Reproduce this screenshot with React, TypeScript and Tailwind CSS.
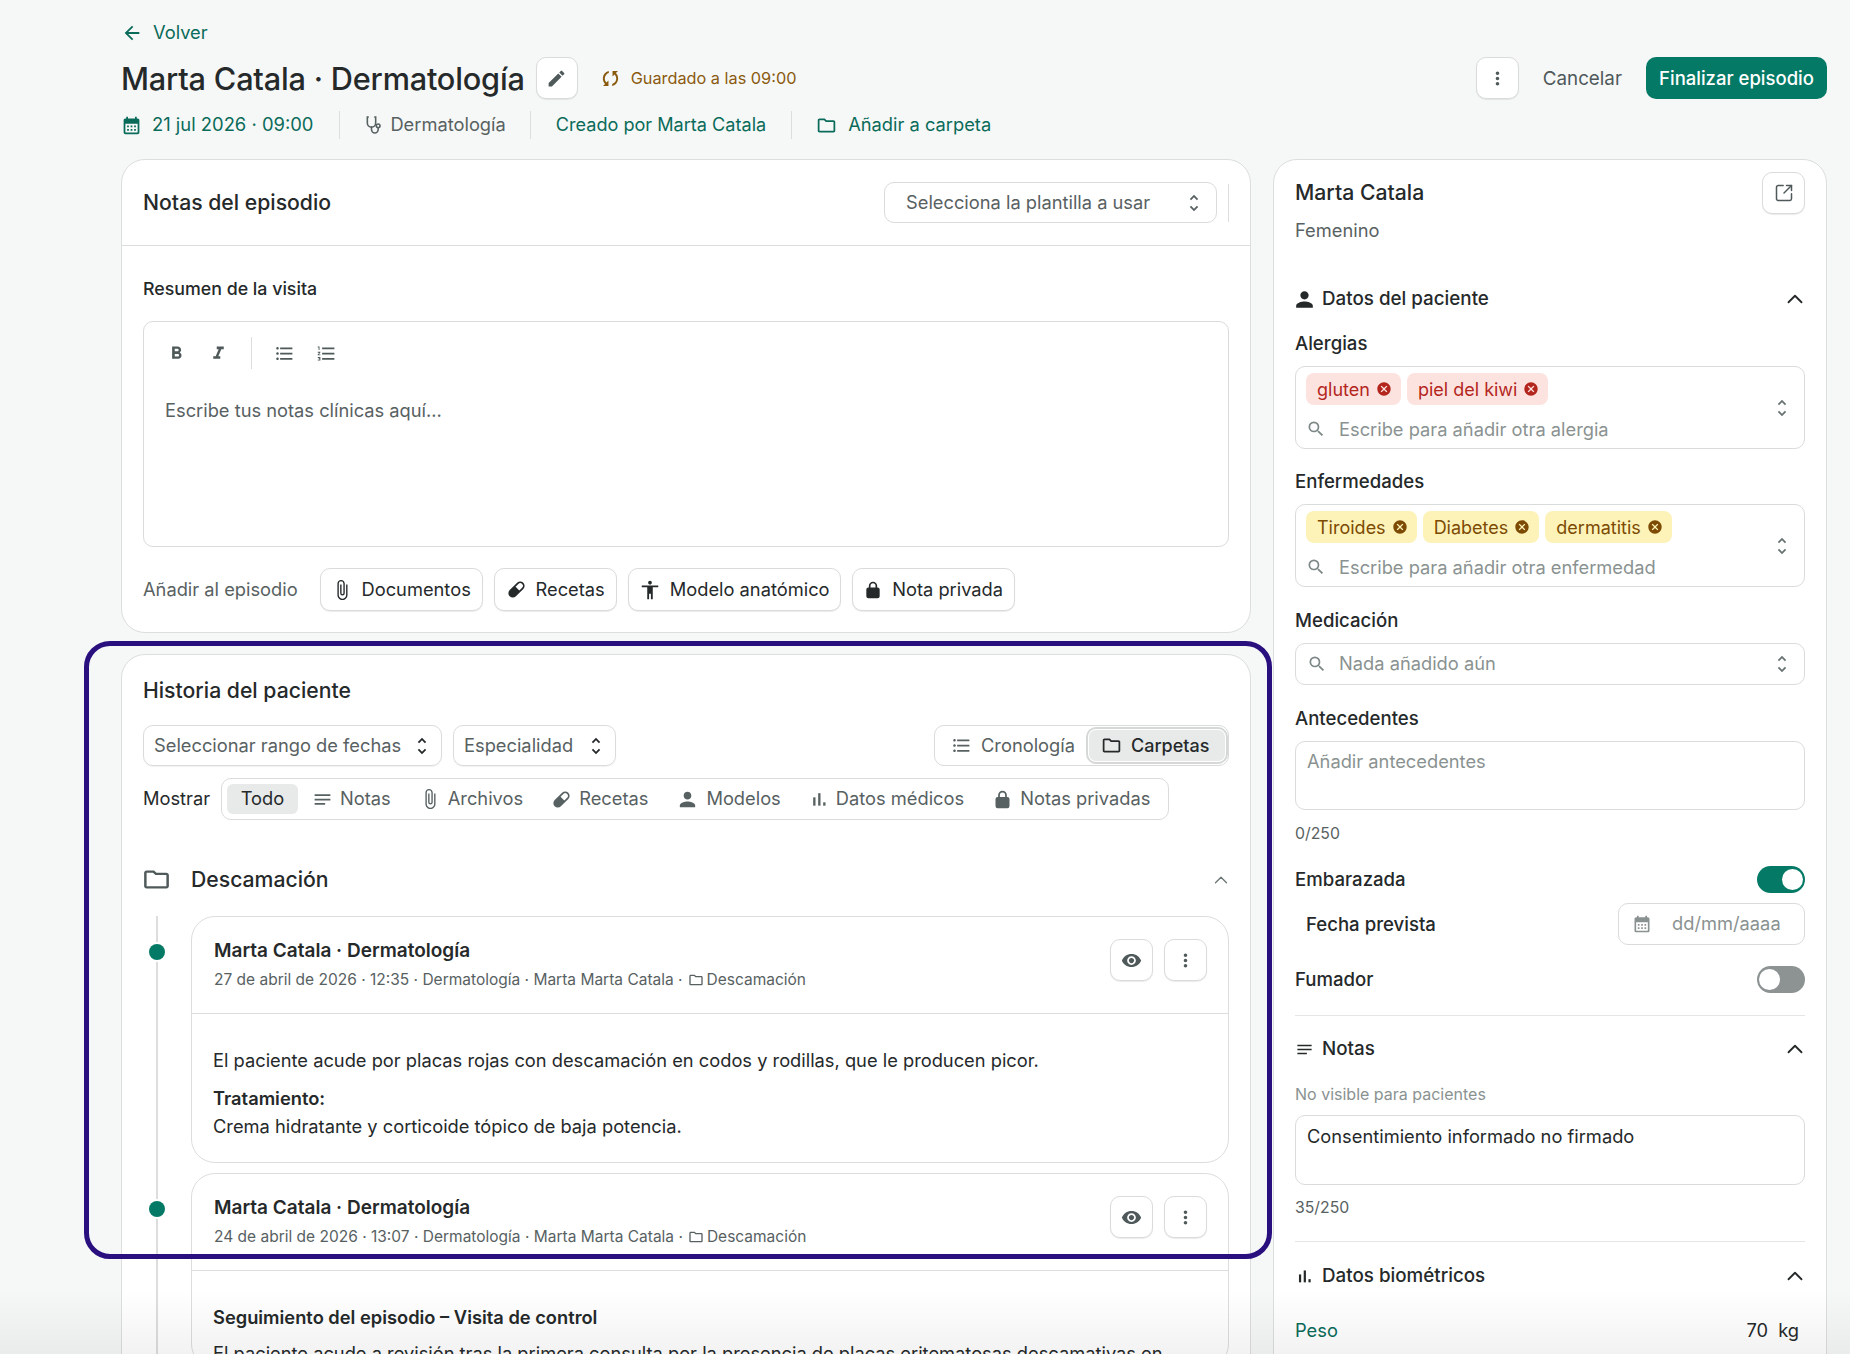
import React from 'react';
import {
  MdArrowBack, MdEdit, MdMoreVert, MdCalendarMonth, MdFormatBold, MdFormatItalic, MdFormatListBulleted,
  MdFormatListNumbered, MdAttachFile, MdAccessibility, MdUnfoldMore, MdNotes,
  MdPerson, MdSearch, MdCancel, MdRemoveRedEye, MdOutlineFolder, MdSync,
} from 'react-icons/md';
import { SquareArrowOutUpRight, ChevronUp } from 'lucide-react';

function PillIcon({ className }: { className?: string }) {
  return (
    <svg viewBox="0 0 24 24" className={className} fill="currentColor">
      <path d="M4.2 19.8a5 5 0 0 1 0-7.1l8.5-8.5a5 5 0 0 1 7.1 7.1l-8.5 8.5a5 5 0 0 1-7.1 0Zm9.9-14.2-3.2 3.2 4.3 4.3 3.2-3.2a3 3 0 0 0-4.3-4.3Z" />
    </svg>
  );
}

function ScopeIcon({ className }: { className?: string }) {
  return (
    <svg viewBox="0 0 24 24" className={className} fill="none" stroke="currentColor" strokeWidth={1.9} strokeLinecap="round">
      <path d="M5 2.5H4v7a5 5 0 0 0 10 0v-7h-1" />
      <path d="M9 14.5v3a4 4 0 0 0 8 0v-2" />
      <circle cx="17" cy="13" r="2.2" />
    </svg>
  );
}

function LockIcon({ className }: { className?: string }) {
  return (
    <svg viewBox="0 0 24 24" className={className} fill="currentColor">
      <path d="M12 2a5 5 0 0 0-5 5v2H6.5A2.5 2.5 0 0 0 4 11.500v8A2.500 2.500 0 0 0 6.500 22h11a2.500 2.500 0 0 0 2.500-2.500v-8A2.500 2.500 0 0 0 17.500 9H17V7a5 5 0 0 0-5-5Zm-3 7V7a3 3 0 0 1 6 0v2H9Z" />
    </svg>
  );
}

function BarsIcon({ className }: { className?: string }) {
  return (
    <svg viewBox="0 0 24 24" className={className} fill="currentColor">
      <rect x="5" y="10" width="2.800" height="10" />
      <rect x="11" y="5" width="2.800" height="15" />
      <rect x="17" y="16" width="2.800" height="4" />
    </svg>
  );
}

function IconButton({ children, className = '' }: { children: React.ReactNode; className?: string }) {
  return (
    <button className={`flex items-center justify-center bg-white border border-[#d9dcdb] rounded-[10px] shadow-[0_1px_1px_rgba(0,0,0,0.08)] text-[#4f595a] ${className}`}>
      {children}
    </button>
  );
}

function Chip({ label, tone }: { label: string; tone: 'red' | 'yellow' }) {
  const cls = tone === 'red' ? 'bg-[#fde3df] text-[#b3261e]' : 'bg-[#fdf3b8] text-[#7c4a03]';
  return (
    <span className={`flex items-center h-[32px] pl-[11px] pr-[9px] gap-[6px] rounded-[8px] text-[18px] ${cls}`}>
      {label}
      <MdCancel className="w-[16px] h-[16px]" />
    </span>
  );
}

function FieldLabel({ children, className = '' }: { children: React.ReactNode; className?: string }) {
  return <div className={`text-[18.6px] font-medium text-[#25292a] leading-[22px] ${className}`}>{children}</div>;
}

function SectionHead({ icon, label }: { icon: React.ReactNode; label: string }) {
  return (
    <div className="flex items-center justify-between h-[24px]">
      <div className="flex items-center gap-[8px] text-[18.8px] font-medium text-[#25292a]">
        <span className="w-[19px] flex justify-center">{icon}</span>
        {label}
      </div>
      <ChevronUp className="w-[26px] h-[26px] text-[#25292a] mr-[-3px]" strokeWidth={1.7} />
    </div>
  );
}

function TagField({ tags, tone, placeholder }: { tags: string[]; tone: 'red' | 'yellow'; placeholder: string }) {
  return (
    <div className="relative h-[83px] border border-[#d9dcdb] rounded-[10px] pl-[10px] pt-[6px]">
      <div className="flex gap-[6px]">
        {tags.map((t) => <Chip key={t} label={t} tone={tone} />)}
      </div>
      <div className="flex items-center gap-[13px] mt-[12px] leading-[24px] text-[#8a9291]">
        <MdSearch className="w-[20px] h-[20px] text-[#7d8786]" />
        <span>{placeholder}</span>
      </div>
      <MdUnfoldMore className="absolute right-[11px] top-[30px] w-[22px] h-[22px] text-[#6a7373]" />
    </div>
  );
}

function EpisodeHeader({ date, time }: { date: string; time: string }) {
  return (
    <div className="flex items-start justify-between h-[97px] pl-[22px] pr-[21px] pt-[22px] border-b border-[#dcdedd]">
      <div>
        <div className="text-[19px] font-semibold text-[#25292a] leading-[24px]">Marta Catala · Dermatología</div>
        <div className="flex items-center text-[15.5px] text-[#586162] mt-[6px] leading-[22px]">
          {date} · {time} · Dermatología · Marta Marta Catala ·
          <MdOutlineFolder className="w-[16px] h-[16px] ml-[5px] mr-[3px]" />
          Descamación
        </div>
      </div>
      <div className="flex gap-[11px]">
        <IconButton className="w-[43px] h-[42px]"><MdRemoveRedEye className="w-[21px] h-[21px]" /></IconButton>
        <IconButton className="w-[43px] h-[42px]"><MdMoreVert className="w-[21px] h-[21px]" /></IconButton>
      </div>
    </div>
  );
}

const filters = [
  { label: 'Notas', icon: <MdNotes className="w-[21px] h-[21px]" /> },
  { label: 'Archivos', icon: <MdAttachFile className="w-[22px] h-[22px]" /> },
  { label: 'Recetas', icon: <PillIcon className="w-[21px] h-[21px]" /> },
  { label: 'Modelos', icon: <MdPerson className="w-[23px] h-[23px]" /> },
  { label: 'Datos médicos', icon: <BarsIcon className="w-[20px] h-[20px]" /> },
  { label: 'Notas privadas', icon: <LockIcon className="w-[21px] h-[21px]" /> },
];

export default function App() {
  return (
    <div className="relative h-[1354px] overflow-hidden bg-[#f6f8f7] text-[#25292a] text-[18.3px] font-['Inter',sans-serif]">
      <div className="pl-[121px] pr-[23px]">
        <div className="flex items-center h-[64px] pt-[1px] gap-[10px] text-[18.3px] text-[#0a6b5a]">
          <MdArrowBack className="w-[22px] h-[22px]" />
          Volver
        </div>

        <div className="flex items-center justify-between h-[42px] mt-[-7px]">
          <div className="flex items-center">
            <h1 className="text-[30.7px] font-medium leading-[36px] text-[#25292a] tracking-[-0.2px] pt-[2px]">Marta Catala · Dermatología</h1>
            <IconButton className="w-[42px] h-[42px] ml-[11px]"><MdEdit className="w-[21px] h-[21px]" /></IconButton>
            <div className="flex items-center ml-[21px] gap-[9px] text-[16.3px] text-[#8a5a0f]">
              <MdSync className="w-[23px] h-[23px] rotate-45" />
              Guardado a las 09:00
            </div>
          </div>
          <div className="flex items-center">
            <IconButton className="w-[43px] h-[42px]"><MdMoreVert className="w-[21px] h-[21px]" /></IconButton>
            <span className="ml-[24px] pt-[2px] text-[#4f595a] text-[18.8px]">Cancelar</span>
            <button className="ml-[24px] h-[42px] w-[181px] pt-[1px] rounded-[10px] bg-[#047a66] text-white text-[18.5px] font-medium">Finalizar episodio</button>
          </div>
        </div>

        <div className="flex items-center h-[28px] mt-[12px] text-[18.3px]">
          <div className="flex items-center gap-[10px] text-[#0a6b5a] pr-[26px] border-r border-[#dcdedd] h-[28px]">
            <MdCalendarMonth className="w-[21px] h-[21px]" />
            <span className="text-[18.4px]">21 jul 2026 · 09:00</span>
          </div>
          <div className="flex items-center gap-[6px] text-[#586162] px-[24px] border-r border-[#dcdedd] h-[28px]">
            <ScopeIcon className="w-[20px] h-[20px]" />
            Dermatología
          </div>
          <div className="flex items-center text-[#0a6b5a] pl-[25px] pr-[25px] border-r border-[#dcdedd] h-[28px] text-[18.1px]">Creado por Marta Catala</div>
          <div className="flex items-center gap-[11px] text-[#0a6b5a] pl-[24px] h-[28px]">
            <MdOutlineFolder className="w-[21px] h-[21px]" />
            Añadir a carpeta
          </div>
        </div>

        <div className="flex gap-[22px] mt-[20px] items-start">
          {/* columna izquierda */}
          <div className="w-[1130px] shrink-0 flex flex-col gap-[21px]">
            <section className="h-[474px] bg-white border border-[#dcdedd] rounded-[24px]">
              <div className="flex items-center justify-between h-[86px] pl-[21px] pr-[21px] border-b border-[#dcdedd]">
                <h2 className="text-[21.2px] font-medium">Notas del episodio</h2>
                <div className="flex items-center h-[38px]">
                  <div className="flex items-center justify-between w-[333px] h-[41px] pl-[21px] pr-[11px] border border-[#d9dcdb] rounded-[10px] text-[#586162]">
                    Selecciona la plantilla a usar
                    <MdUnfoldMore className="w-[22px] h-[22px]" />
                  </div>
                  <div className="w-px h-[38px] bg-[#dcdedd] ml-[11px]" />
                </div>
              </div>
              <div className="px-[21px] pt-[32px]">
                <div className="text-[17.8px] font-medium leading-[22px]">Resumen de la visita</div>
                <div className="h-[226px] mt-[21px] border border-[#d9dcdb] rounded-[10px]">
                  <div className="flex items-center h-[62px] pl-[22px] text-[#4f595a]">
                    <MdFormatBold className="w-[21px] h-[21px]" />
                    <MdFormatItalic className="w-[21px] h-[21px] ml-[21px]" />
                    <div className="w-px h-[32px] bg-[#dcdedd] ml-[22px]" />
                    <MdFormatListBulleted className="w-[21px] h-[21px] ml-[22px]" />
                    <MdFormatListNumbered className="w-[21px] h-[21px] ml-[21px]" />
                  </div>
                  <div className="pl-[21px] mt-[13px] text-[#586162] leading-[26px]">Escribe tus notas clínicas aquí...</div>
                </div>
                <div className="flex items-center mt-[21px] gap-[11px]">
                  <span className="text-[#586162] mr-[11px]">Añadir al episodio</span>
                  <IconButton className="h-[43px] w-[163px] gap-[8px] !text-[#25292a]"><MdAttachFile className="w-[22px] h-[22px]" />Documentos</IconButton>
                  <IconButton className="h-[43px] w-[123px] gap-[9px] !text-[#25292a]"><PillIcon className="w-[21px] h-[21px]" />Recetas</IconButton>
                  <IconButton className="h-[43px] w-[213px] gap-[9px] !text-[#25292a]"><MdAccessibility className="w-[22px] h-[22px]" />Modelo anatómico</IconButton>
                  <IconButton className="h-[43px] w-[163px] gap-[9px] !text-[#25292a]"><LockIcon className="w-[20px] h-[20px]" />Nota privada</IconButton>
                </div>
              </div>
            </section>

            <section className="h-[760px] bg-white border border-[#dcdedd] rounded-[24px] pl-[21px] pr-[21px] pt-[21px]">
              <h2 className="text-[21.2px] font-medium leading-[28px]">Historia del paciente</h2>
              <div className="flex items-center justify-between mt-[21px]">
                <div className="flex gap-[11px] text-[#586162]">
                  <div className="flex items-center justify-between w-[299px] h-[41px] pl-[10px] pr-[8px] border border-[#d9dcdb] rounded-[10px] shadow-[0_1px_1px_rgba(0,0,0,0.06)]">
                    Seleccionar rango de fechas
                    <MdUnfoldMore className="w-[22px] h-[22px] text-[#25292a]" />
                  </div>
                  <div className="flex items-center justify-between w-[163px] h-[41px] pl-[10px] pr-[8px] border border-[#d9dcdb] rounded-[10px] shadow-[0_1px_1px_rgba(0,0,0,0.06)]">
                    Especialidad
                    <MdUnfoldMore className="w-[22px] h-[22px] text-[#25292a]" />
                  </div>
                </div>
                <div className="flex items-center justify-between w-[295px] h-[41px] pl-[16px] pr-[3px] border border-[#d9dcdb] rounded-[10px] text-[#586162]">
                  <span className="flex items-center gap-[9px]"><MdFormatListBulleted className="w-[21px] h-[21px]" />Cronología</span>
                  <span className="flex items-center gap-[9px] w-[136px] h-[31px] pl-[12px] bg-[#e8eaea] rounded-[7px] outline-2 outline-[#d5d8d7] outline-offset-1 text-[#25292a] font-medium text-[18px]"><MdOutlineFolder className="w-[21px] h-[21px]" />Carpetas</span>
                </div>
              </div>
              <div className="flex items-center mt-[12px] h-[42px]">
                <span className="w-[78px] text-[#25292a]">Mostrar</span>
                <div className="flex items-center h-[42px] pl-[5px] pr-[18px] border border-[#d9dcdb] rounded-[10px] text-[#586162]">
                  <span className="flex items-center justify-center w-[71px] h-[30px] mr-[14px] bg-[#e8eaea] rounded-[6px] text-[#25292a]">Todo</span>
                  <div className="flex items-center gap-[28px]">
                    {filters.map((f) => (
                      <span key={f.label} className="flex items-center gap-[7px]">{f.icon}{f.label}</span>
                    ))}
                  </div>
                </div>
              </div>
              <div className="flex items-center justify-between h-[32px] mt-[44px]">
                <div className="flex items-center gap-[21px] text-[21.2px] font-medium">
                  <MdOutlineFolder className="w-[27px] h-[27px] text-[#4f595a] scale-x-110" />
                  Descamación
                </div>
                <ChevronUp className="w-[22px] h-[22px] text-[#6a7373] mr-[-3px]" strokeWidth={1.4} />
              </div>
              <div className="relative mt-[20px] pl-[48px]">
                <div className="absolute left-[13px] top-0 bottom-[-200px] w-[2px] bg-[#dcdedd]" />
                <div className="absolute left-[6px] top-[28px] w-[16px] h-[16px] rounded-full bg-[#047a66] ring-2 ring-white" />
                <div className="absolute left-[6px] top-[285px] w-[16px] h-[16px] rounded-full bg-[#047a66] ring-2 ring-white" />
                <article className="h-[247px] border border-[#dcdedd] rounded-[24px]">
                  <EpisodeHeader date="27 de abril de 2026" time="12:35" />
                  <div className="px-[21px] pt-[32px] text-[#25292a] leading-[28px]">
                    <p>El paciente acude por placas rojas con descamación en codos y rodillas, que le producen picor.</p>
                    <p className="font-semibold mt-[10px]">Tratamiento:</p>
                    <p>Crema hidratante y corticoide tópico de baja potencia.</p>
                  </div>
                </article>
                <article className="mt-[10px] border border-[#dcdedd] rounded-[24px]">
                  <EpisodeHeader date="24 de abril de 2026" time="13:07" />
                  <div className="px-[21px] pt-[32px] text-[#25292a]">
                    <p className="font-semibold leading-[28px]">Seguimiento del episodio – Visita de control</p>
                    <p className="mt-[8px] leading-[28px] whitespace-nowrap">El paciente acude a revisión tras la primera consulta por la presencia de placas eritematosas descamativas en</p>
                  </div>
                </article>
              </div>
            </section>
          </div>

          {/* columna derecha */}
          <aside className="w-[554px] shrink-0 h-[1300px] bg-white border border-[#dcdedd] rounded-[24px] px-[21px] pt-[12px]">
            <div className="flex items-start justify-between">
              <div className="pt-[6px]">
                <h2 className="text-[21.2px] font-medium leading-[28px]">Marta Catala</h2>
                <div className="text-[#586162] mt-[12px] leading-[24px]">Femenino</div>
              </div>
              <IconButton className="w-[43px] h-[42px]"><SquareArrowOutUpRight className="w-[20px] h-[20px]" strokeWidth={1.8} /></IconButton>
            </div>
            <div className="mt-[45px]">
              <SectionHead icon={<MdPerson className="w-[25px] h-[25px] shrink-0" />} label="Datos del paciente" />
            </div>
            <FieldLabel className="mt-[21px] mb-[12px]">Alergias</FieldLabel>
            <TagField tags={['gluten', 'piel del kiwi']} tone="red" placeholder="Escribe para añadir otra alergia" />
            <FieldLabel className="mt-[21px] mb-[12px]">Enfermedades</FieldLabel>
            <TagField tags={['Tiroides', 'Diabetes', 'dermatitis']} tone="yellow" placeholder="Escribe para añadir otra enfermedad" />
            <FieldLabel className="mt-[22px]">Medicación</FieldLabel>
            <div className="flex items-center justify-between h-[42px] mt-[12px] pl-[11px] pr-[11px] border border-[#d9dcdb] rounded-[10px] text-[#8a9291]">
              <span className="flex items-center gap-[12px]"><MdSearch className="w-[20px] h-[20px] text-[#7d8786]" />Nada añadido aún</span>
              <MdUnfoldMore className="w-[22px] h-[22px] text-[#6a7373]" />
            </div>
            <FieldLabel className="mt-[22px]">Antecedentes</FieldLabel>
            <div className="h-[69px] mt-[12px] pl-[11px] pt-[5px] border border-[#d9dcdb] rounded-[10px] text-[#8a9291] leading-[28px]">Añadir antecedentes</div>
            <div className="mt-[14px] text-[15.8px] text-[#586162] leading-[20px]">0/250</div>
            <div className="flex items-center justify-between mt-[21px] h-[28px]">
              <FieldLabel>Embarazada</FieldLabel>
              <div className="flex items-center justify-end w-[48px] h-[27px] rounded-full bg-[#047a66] pr-[2px]"><div className="w-[21px] h-[21px] bg-white rounded-full" /></div>
            </div>
            <div className="flex items-center justify-between mt-[10px] h-[42px]">
              <FieldLabel className="ml-[11px]">Fecha prevista</FieldLabel>
              <div className="flex items-center w-[187px] h-[42px] pl-[13px] border border-[#d9dcdb] rounded-[10px] text-[#8a9291]">
                <MdCalendarMonth className="w-[20px] h-[20px]" />
                <span className="ml-[20px]">dd/mm/aaaa</span>
              </div>
            </div>
            <div className="flex items-center justify-between mt-[20px] h-[28px]">
              <FieldLabel>Fumador</FieldLabel>
              <div className="flex items-center w-[48px] h-[27px] rounded-full bg-[#8c9392] pl-[2px]"><div className="w-[21px] h-[21px] bg-white rounded-full" /></div>
            </div>
            <div className="h-px bg-[#e4e6e5] mt-[22px]" />
            <div className="mt-[21px]">
              <SectionHead icon={<MdNotes className="w-[21px] h-[21px]" />} label="Notas" />
            </div>
            <div className="mt-[23px] text-[16px] text-[#8a9291] leading-[20px]">No visible para pacientes</div>
            <div className="h-[70px] mt-[11px] pl-[11px] pt-[6px] border border-[#d9dcdb] rounded-[10px] text-[#25292a] leading-[28px]">Consentimiento informado no firmado</div>
            <div className="mt-[13px] text-[15.8px] text-[#586162] leading-[20px]">35/250</div>
            <div className="h-px bg-[#e4e6e5] mt-[23px]" />
            <div className="mt-[22px]">
              <SectionHead icon={<BarsIcon className="w-[20px] h-[20px]" />} label="Datos biométricos" />
            </div>
            <div className="flex items-center justify-between mt-[30px] pr-[6px] leading-[24px]">
              <span className="text-[#0a6b5a]">Peso</span>
              <span className="text-[#25292a]">70<span className="ml-[10px]">kg</span></span>
            </div>
          </aside>
        </div>
      </div>

      {/* recuadro de resaltado */}
      <div className="absolute left-[84px] top-[641px] w-[1188px] h-[618px] border-[5px] border-[#2a0f7f] rounded-[26px] pointer-events-none" />
      {/* degradado inferior */}
      <div className="absolute left-0 right-0 bottom-0 h-[64px] bg-gradient-to-b from-transparent to-black/5 pointer-events-none" />
    </div>
  );
}
